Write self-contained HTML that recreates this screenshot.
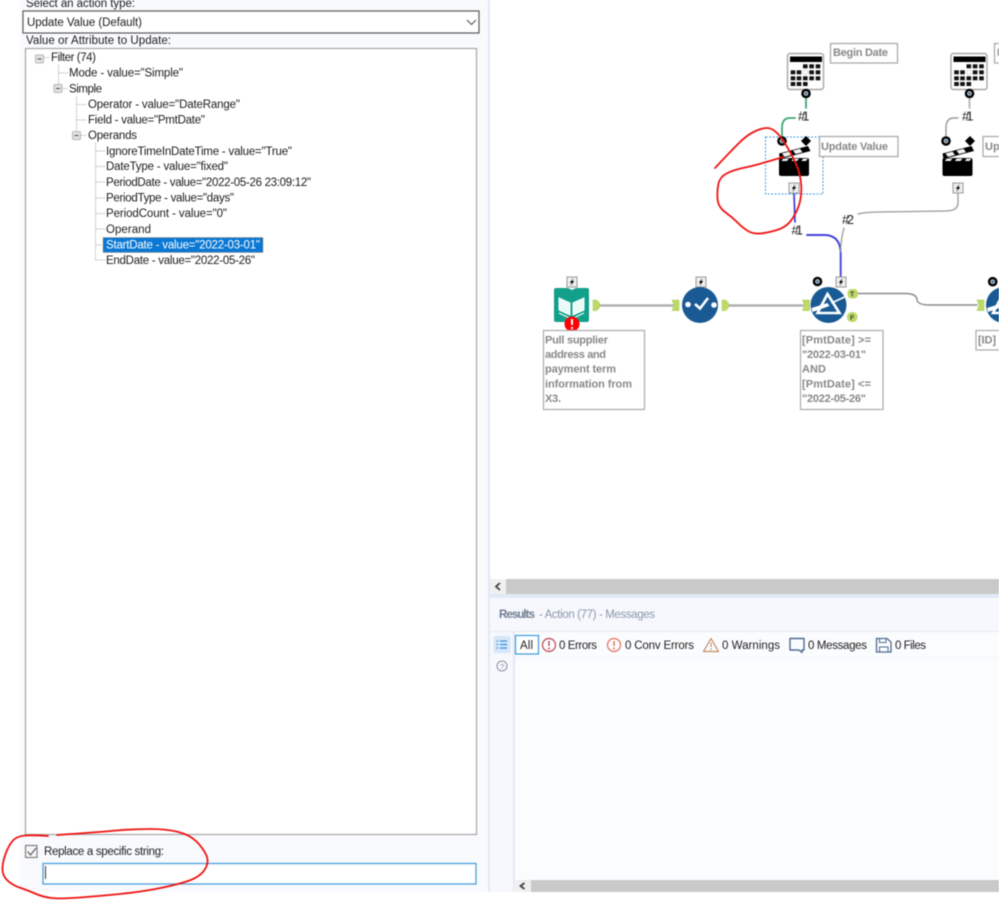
<!DOCTYPE html>
<html><head><meta charset="utf-8"><title>Workflow</title>
<style>
html,body{margin:0;padding:0;background:#fff;width:999px;height:900px;overflow:hidden}
svg{display:block;filter:blur(.4px);font-family:"Liberation Sans",sans-serif}
.t{font-size:11.5px;fill:#1c1c1c}
.n{font-size:11px;font-weight:bold;fill:#888}
.r{font-size:11.5px;fill:#222}
.h{font-size:13px;fill:#222}
</style></head><body>
<svg width="999" height="900" viewBox="0 0 999 900" xmlns="http://www.w3.org/2000/svg">
<defs>
<g id="cal">
<rect x="787.5" y="53.5" width="36" height="36" rx="2.5" fill="#fff" stroke="#a8a8a8" stroke-width="1.4"/>
<rect x="790" y="56.5" width="32" height="5.5" fill="#000"/>
<g fill="#111">
<rect x="803" y="64.3" width="4.6" height="4"/><rect x="809.3" y="64.3" width="4.6" height="4"/><rect x="815.7" y="64.3" width="4.6" height="4"/>
<rect x="790.7" y="70.3" width="4.6" height="4"/><rect x="796.7" y="70.3" width="4.6" height="4"/><rect x="809.3" y="70.3" width="4.6" height="4"/><rect x="815.7" y="70.3" width="4.6" height="4"/>
<rect x="790.7" y="76.3" width="4.6" height="4"/><rect x="796.7" y="76.3" width="4.6" height="4"/><rect x="803" y="76.3" width="4.6" height="4"/><rect x="809.3" y="76.3" width="4.6" height="4"/><rect x="815.7" y="76.3" width="4.6" height="4"/>
<rect x="790.7" y="82" width="4.6" height="4"/><rect x="796.7" y="82" width="4.6" height="4"/><rect x="803" y="82" width="4.6" height="4"/>
</g>
<circle cx="805.5" cy="72.3" r="2.4" fill="#fff" stroke="#ccc" stroke-width=".6"/>
</g>
<g id="q"><circle r="4.8" fill="#000"/><circle r="1.9" fill="#4a7aa0" stroke="#ddd" stroke-width=".9"/></g>
<g id="bolt"><rect x="-5" y="-5" width="10" height="10" fill="#eee" stroke="#999"/><path d="M1.5,-4 L-2.2,.8 H-.3 L-1.5,4 L2.2,-1 H.2 Z" fill="#000"/></g>
<g id="clap">
<rect x="779" y="158" width="30" height="18" rx="2" fill="#000"/>
<path d="M779,153.5 L808,146 L810.5,151 L780,159 Z" fill="#000"/>
<g fill="#f2f2f2"><path d="M782,153.5 L789,151.6 L791.5,155 L784.5,156.9 Z"/><path d="M793,150.6 L800,148.8 L802.5,152.2 L795.5,154 Z"/><path d="M783,158.6 L789,158.6 L787,161 L781.5,161 Z"/><path d="M793,158.6 L799,158.6 L797,161 L791.5,161 Z"/><path d="M803,158.6 L808,158.6 L806,161 L801.5,161 Z"/></g>
</g>
<path id="dia" d="M0,-5 L5,0 L0,5 L-5,0 Z" fill="#000"/>
<path id="aout" d="M0,-5.3 H3.5 Q7,-3 7,0 Q7,3 3.5,5.3 H0 Z" fill="#bdd966" stroke="#a9c755" stroke-width=".5"/>
<path id="ain" d="M0,-5.3 H7 V5.3 H0 L2,0 Z" fill="#bdd966" stroke="#a9c755" stroke-width=".5"/>
<g id="prism">
<circle r="18" fill="#195a94"/>
<path d="M-1,-11 L-11,8 H11 Z" fill="none" stroke="#fff" stroke-width="2.6"/>
<path d="M-17,3 L-1,-2 L1,1 L-16,7 Z" fill="#fff"/>
<path d="M3,-2 L16,-8" stroke="#fff" stroke-width="1.6"/>
</g>
</defs>

<!-- backgrounds -->
<rect x="20" y="0" width="468" height="892" fill="#f8fafd"/>
<rect x="488" y="0" width="2" height="892" fill="#e2e9f6"/>
<!-- results panel -->
<rect x="490" y="579" width="509" height="15" fill="#c9c9c9"/>
<rect x="490" y="579" width="16" height="15" fill="#f0f0f0"/>
<path d="M500,583 L496,586.5 L500,590" fill="none" stroke="#444" stroke-width="1.8"/>
<rect x="490" y="594" width="509" height="4" fill="#e2e9f6"/>
<rect x="490" y="598" width="509" height="33" fill="#f6f8fd"/>
<rect x="490" y="631" width="509" height="1" fill="#e3e8f2"/>
<rect x="490" y="632" width="509" height="260" fill="#fbfcfe"/>
<rect x="490" y="632" width="24" height="260" fill="#f6f8fd"/>
<rect x="513" y="632" width="2" height="260" fill="#e2e9f6"/>
<rect x="515" y="657" width="484" height="1" fill="#eef1f7"/>
<rect x="514" y="880" width="17" height="12" fill="#f0f0f0"/>
<rect x="531" y="880" width="468" height="12" fill="#c9c9c9"/>
<path d="M524.5,883 L520.5,886 L524.5,889" fill="none" stroke="#444" stroke-width="1.8"/>

<!-- left: header controls -->
<text class="t" x="26" y="7" textLength="109">Select an action type:</text>
<rect x="23" y="11" width="456" height="22" fill="#fff" stroke="#5a5a5a" stroke-width="1.2"/>
<text class="t" x="27" y="26" textLength="115">Update Value (Default)</text>
<path d="M467,20 L471.5,24.5 L476,20" fill="none" stroke="#555" stroke-width="1.1"/>
<text class="t" x="26" y="44" textLength="145">Value or Attribute to Update:</text>
<rect x="25.5" y="48.5" width="451" height="786" fill="#fff" stroke="#a6a6a6" stroke-width="1.2"/>

<!-- tree lines -->
<g stroke="#a8a8a8" stroke-width="1" stroke-dasharray="1 1" fill="none">
<path d="M44,57.5 H50"/>
<path d="M58.5,65 V84 M59,73 H68"/>
<path d="M62,88.5 H68"/>
<path d="M76.5,97 V130 M77,104.5 H87 M77,120 H87"/>
<path d="M81,135.5 H87"/>
<path d="M95.5,143 V260 M96,151 H105 M96,166.5 H105 M96,182 H105 M96,198 H105 M96,213.5 H105 M96,229 H105 M96,245 H102 M96,260 H105"/>
</g>
<g fill="#e2e2e2" stroke="#b8b8b8">
<rect x="35.5" y="55" width="8" height="8" rx="1"/><rect x="54" y="84.5" width="8" height="8" rx="1"/><rect x="72.5" y="131.5" width="8" height="8" rx="1"/>
</g>
<g stroke="#446" stroke-width="1"><path d="M37.5,59 H41.5 M56,88.5 H60 M74.5,135.5 H78.5"/></g>

<!-- tree text -->
<text class="t" x="51" y="61" textLength="45">Filter (74)</text>
<text class="t" x="69" y="76.5" textLength="114">Mode - value=&quot;Simple&quot;</text>
<text class="t" x="69" y="92.5" textLength="33">Simple</text>
<text class="t" x="88" y="108" textLength="152">Operator - value=&quot;DateRange&quot;</text>
<text class="t" x="88" y="123.5" textLength="117">Field - value=&quot;PmtDate&quot;</text>
<text class="t" x="88" y="139" textLength="49">Operands</text>
<text class="t" x="106" y="155" textLength="186">IgnoreTimeInDateTime - value=&quot;True&quot;</text>
<text class="t" x="106" y="170" textLength="122">DateType - value=&quot;fixed&quot;</text>
<text class="t" x="106" y="186" textLength="205">PeriodDate - value=&quot;2022-05-26 23:09:12&quot;</text>
<text class="t" x="106" y="201.5" textLength="128">PeriodType - value=&quot;days&quot;</text>
<text class="t" x="106" y="217" textLength="121">PeriodCount - value=&quot;0&quot;</text>
<text class="t" x="106" y="233" textLength="45">Operand</text>
<rect x="103" y="237.5" width="160" height="15" fill="#0a78d4" stroke="#c8803a" stroke-width=".8" stroke-dasharray="1 1"/>
<text class="t" x="106" y="248.5" textLength="154" style="fill:#fff">StartDate - value=&quot;2022-03-01&quot;</text>
<text class="t" x="106" y="264" textLength="149">EndDate - value=&quot;2022-05-26&quot;</text>

<!-- bottom left -->
<rect x="25.5" y="845.5" width="11.5" height="12" fill="#f6f6f6" stroke="#777" stroke-width="1.1"/>
<path d="M27.5,851.5 L30.5,855 L36,848" fill="none" stroke="#555" stroke-width="1.1"/>
<text class="t" x="44" y="855" textLength="120">Replace a specific string:</text>
<rect x="43" y="863.5" width="433" height="20.5" fill="#fff" stroke="#4a9fe0" stroke-width="1.3"/>
<rect x="45" y="866" width="1" height="13" fill="#333"/>

<!-- connections -->
<g fill="none" stroke-linecap="round">
<path d="M806,99 V108" stroke="#3fa96f" stroke-width="1.8"/>
<path d="M795,118 H790 Q782,118 782,128 V137" stroke="#3fa96f" stroke-width="1.8"/>
<path d="M969.5,99 V108" stroke="#aaa" stroke-width="1.6"/>
<path d="M958,118 H954 Q946,118 946,128 V137" stroke="#999" stroke-width="1.4"/>
<path d="M794,193 L795,222" stroke="#4444dd" stroke-width="1.8"/>
<path d="M807,235 H824 Q840.7,235 840.7,254 V277" stroke="#4444dd" stroke-width="1.9"/>
<path d="M958,193 V203 Q958,211 945,211 L880,212 Q866,212 858,214" stroke="#999" stroke-width="1.3"/>
<path d="M844,228 Q841,238 840.5,252" stroke="#999" stroke-width="1.3"/>
<path d="M600,305.5 H673 M729,305.5 H803" stroke="#bdbdbd" stroke-width="2.4"/>
<path d="M600,305.5 H673 M729,305.5 H803" stroke="#8a8a8a" stroke-width=".6"/>
<path d="M858,293.5 H905 Q917,293.5 917,300 Q918,305 930,305 H977" stroke="#8a8a8a" stroke-width="1.4"/>
</g>

<!-- top tools -->
<use href="#cal"/><use href="#cal" x="163.5"/>
<use href="#q" x="806" y="93.5"/><use href="#q" x="969.5" y="93.5"/>
<rect x="830.5" y="43.5" width="67" height="19.5" fill="#fff" stroke="#aaa" stroke-width="1.3"/>
<text class="n" x="833" y="56" textLength="55">Begin Date</text>
<rect x="994.5" y="43.5" width="30" height="19.5" fill="#fff" stroke="#aaa" stroke-width="1.3"/>
<text class="n" x="997" y="56">Begin</text>
<text class="h" x="798" y="120.5" textLength="11.5">#1</text>
<text class="h" x="962" y="120.5" textLength="11.5">#1</text>
<rect x="765.5" y="137" width="57.5" height="57" fill="none" stroke="#3d9be0" stroke-width="1" stroke-dasharray="2 1.5"/>
<use href="#clap"/><use href="#clap" x="163.5"/>
<use href="#q" x="782" y="141"/><use href="#q" x="946" y="141"/>
<use href="#dia" x="806" y="141"/><use href="#dia" x="970" y="141"/>
<rect x="819.5" y="136.5" width="78.5" height="20" fill="#fff" stroke="#aaa" stroke-width="1.3"/>
<text class="n" x="821" y="150" textLength="67">Update Value</text>
<rect x="983" y="136.5" width="40" height="20" fill="#fff" stroke="#aaa" stroke-width="1.3"/>
<text class="n" x="985" y="150">Update</text>
<use href="#bolt" x="794" y="188"/><use href="#bolt" x="958" y="188"/>
<text class="h" x="791.5" y="234.5" textLength="11.5">#1</text>
<text class="h" x="842" y="224" textLength="12">#2</text>

<!-- main row -->
<use href="#bolt" x="572" y="282"/><use href="#bolt" x="701" y="282"/><use href="#bolt" x="841" y="282"/>
<path d="M556,288 H568 L572,290 L576,288 H587 Q589,288 589,290 V320 Q589,322 587,322 H556 Q554,322 554,320 V290 Q554,288 556,288 Z" fill="#12a08a"/>
<path d="M559,298 L570,303 V315 L559,310 Z M584,298 L573,303 V315 L584,310 Z" fill="#eafaf6" stroke="#fff" stroke-width="1"/>
<path d="M559,313 L571.5,319 L584,313" fill="none" stroke="#fff" stroke-width="1.1"/>
<circle cx="572" cy="324" r="7.5" fill="#f00"/>
<path d="M572,319 V325 M572,327 V329" stroke="#fff" stroke-width="2"/>
<use href="#aout" x="593" y="305.3"/>
<use href="#ain" x="672" y="305.3"/>
<circle cx="700" cy="305" r="18" fill="#195a94"/>
<circle cx="688" cy="304.5" r="2.8" fill="#fff"/><circle cx="714" cy="305" r="2.8" fill="#fff"/>
<path d="M695,304 L700,308.5 L708,298" fill="none" stroke="#fff" stroke-width="2.6"/>
<use href="#aout" x="722" y="305.3"/>
<use href="#ain" x="802.5" y="305.3"/>
<use href="#prism" x="828.5" y="305"/>
<use href="#q" x="817.5" y="281.5"/>
<rect x="847.5" y="289" width="10.5" height="9.5" rx="4" fill="#bdd966"/>
<rect x="847" y="312" width="10.5" height="10" rx="4.5" fill="#bdd966"/>
<text x="850" y="296.5" style="font-size:7px;font-weight:bold;fill:#444">T</text>
<text x="850" y="320" style="font-size:7px;font-weight:bold;fill:#444">F</text>
<use href="#ain" x="977" y="305.3"/>
<use href="#prism" x="1004" y="305"/>
<use href="#q" x="992.7" y="281.7"/>

<!-- notes -->
<rect x="543.5" y="330.5" width="101" height="79" fill="#fff" stroke="#aaa" stroke-width="1.2"/>
<text class="n" x="545" y="343.5" textLength="63">Pull supplier</text>
<text class="n" x="545" y="358" textLength="61">address and</text>
<text class="n" x="545" y="372.5" textLength="71">payment term</text>
<text class="n" x="545" y="387.5" textLength="87">information from</text>
<text class="n" x="545" y="402" textLength="16">X3.</text>
<rect x="800.5" y="330.5" width="82.5" height="79" fill="#fff" stroke="#aaa" stroke-width="1.2"/>
<text class="n" x="802" y="343.5" textLength="69">[PmtDate] &gt;=</text>
<text class="n" x="802" y="358" textLength="64">&quot;2022-03-01&quot;</text>
<text class="n" x="802" y="372.5" textLength="24">AND</text>
<text class="n" x="802" y="387.5" textLength="69">[PmtDate] &lt;=</text>
<text class="n" x="802" y="402" textLength="64">&quot;2022-05-26&quot;</text>
<rect x="976" y="330.5" width="40" height="19.5" fill="#fff" stroke="#aaa" stroke-width="1.2"/>
<text class="n" x="978" y="343.5" textLength="18">[ID]</text>

<!-- results text -->
<text x="499" y="618" textLength="36" style="font-size:11.5px;font-weight:bold;fill:#6f7c90">Results</text>
<text x="539" y="618" textLength="116" style="font-size:11.5px;fill:#8d98ab">- Action (77) - Messages</text>

<!-- toolbar -->
<rect x="493.5" y="636" width="17" height="17" rx="2" fill="#d6e7f9"/>
<path d="M500,641 H507 M500,644.5 H507 M500,648 H507" stroke="#3a8fdc" stroke-width="1.2"/>
<path d="M496.5,641 H498 M496.5,644.5 H498 M496.5,648 H498" stroke="#3a8fdc" stroke-width="1.2"/>
<circle cx="502" cy="666" r="5" fill="none" stroke="#8a94a3" stroke-width="1"/>
<text x="500" y="669" style="font-size:7.5px;fill:#8a94a3">?</text>
<rect x="515.5" y="635.5" width="23" height="18.5" fill="#fff" stroke="#3d9be0" stroke-width="1.2"/>
<text class="r" x="520" y="649" textLength="13" style="fill:#222">All</text>
<circle cx="549" cy="645" r="6.5" fill="none" stroke="#c0424f" stroke-width="1.2"/>
<path d="M549,641 V646 M549,647.5 V649.5" stroke="#c0424f" stroke-width="1.4"/>
<text class="r" x="559" y="649" textLength="38">0 Errors</text>
<circle cx="614" cy="645" r="6.5" fill="none" stroke="#e0705c" stroke-width="1.2"/>
<path d="M614,641 V646 M614,647.5 V649.5" stroke="#e0705c" stroke-width="1.4"/>
<text class="r" x="625" y="649" textLength="69">0 Conv Errors</text>
<path d="M711,638.5 L718.5,651.5 H703.5 Z" fill="none" stroke="#c08d63" stroke-width="1.2" stroke-linejoin="round"/>
<path d="M711,642.5 V647 M711,648.3 V650" stroke="#c08d63" stroke-width="1.1"/>
<text class="r" x="722" y="649" textLength="58">0 Warnings</text>
<path d="M790,638.5 H804 V650 H802 V652.5 L799,650 H790 Z" fill="none" stroke="#506b92" stroke-width="1.4" stroke-linejoin="round"/>
<text class="r" x="808" y="649" textLength="59">0 Messages</text>
<path d="M876.5,638.5 H887 L891,642 V652 H876.5 Z" fill="none" stroke="#506b92" stroke-width="1.3"/>
<path d="M879.5,638.5 V642.5 H886 V638.5 M879.5,652 V647 H888 V652" fill="none" stroke="#506b92" stroke-width="1"/>
<text class="r" x="895" y="649" textLength="31">0 Files</text>

<!-- red lassos -->
<g fill="none" stroke="#f01414" stroke-width="1.8" stroke-linecap="round">
<path d="M715,168 Q730,152 738.5,143.5 Q747,135 754.5,131.5 Q762,128 767,128 Q772,128 777,133 Q782,138 787.5,147.5 Q793,157 796.5,165 Q800,173 801,183 Q802,193 800,201.5 Q798,210 792.5,218.5 Q787,227 777,230 Q767,233 760,233.5 Q753,234 748,231 Q743,228 737.5,222.5 Q732,217 725,212 Q718,207 717.5,198.5 Q717,190 718.5,183.5 Q720,177 726.5,173.5 Q733,170 745,167.5 Q757,165 783,157"/>
<path d="M48,836 Q33,835 25.5,835.5 Q18,836 14,839.5 Q10,843 6.5,851.5 Q3,860 2.5,867.5 Q2,875 7,880 Q12,885 19.5,887.5 Q27,890 35,893.5 Q43,897 51.5,898 Q60,899 80,897.5 Q100,896 120,894 Q140,892 158,888.5 Q176,885 188,881 Q200,877 204.75,869.5 Q209.5,862 206.25,855 Q203,848 196.5,841.5 Q190,835 178.5,832 Q167,829 150,829 Q133,829 116.5,830.5 Q100,832 57,835"/>
</g>
</svg>
</body></html>
